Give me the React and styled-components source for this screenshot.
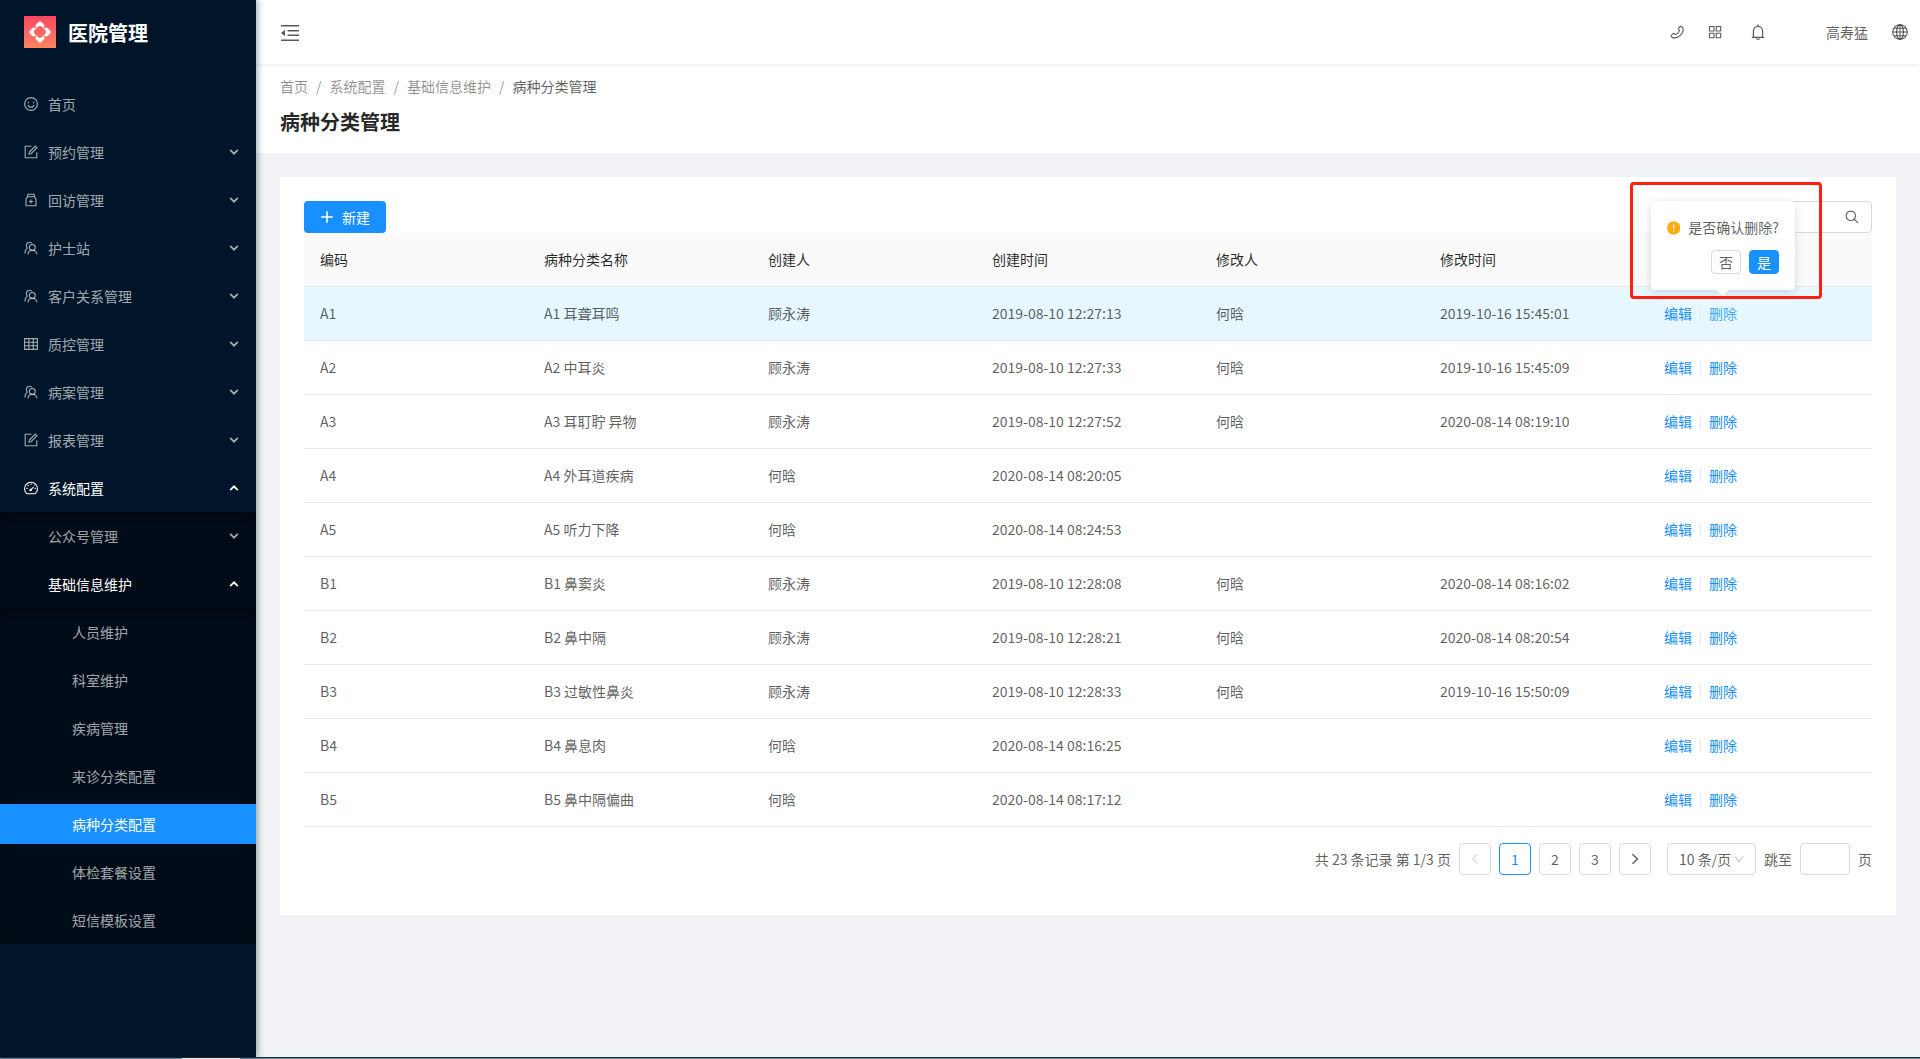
import React from "react";
import styled, { createGlobalStyle, css } from "styled-components";

const Global = createGlobalStyle`
  *, *::before, *::after { box-sizing: border-box; }
  body { margin: 0; background: #f0f2f5; }
  body, button, input, select {
    font-family: "Noto Sans CJK SC", "Noto Sans", sans-serif;
    font-size: 14px;
    line-height: 21px;
    color: rgba(0, 0, 0, 0.65);
  }
  a { color: inherit; text-decoration: none; }
  ul, ol { list-style: none; margin: 0; padding: 0; }
`;

const Layout = styled.div`
  display: grid;
  grid-template-columns: 256px minmax(0, 1fr);
  grid-template-rows: 1fr 2px;
  min-height: 100vh;
`;

const Sidebar = styled.aside`
  position: relative;
  z-index: 1;
  background: #001529;
  box-shadow: 2px 0 6px rgba(0, 21, 41, 0.35);
`;

const Brand = styled.a`
  display: flex;
  align-items: center;
  gap: 12px;
  height: 64px;
  padding: 0 24px;
  color: #fff;
  font-size: 20px;
  font-weight: 600;
`;

const Menu = styled.ul`
  padding: 16px 0 0;
`;

const SubMenu = styled.ul`
  background: #000c17;
  box-shadow: 0 2px 8px rgba(0, 0, 0, 0.45) inset;
  padding: 4px 0;
  margin: 4px 0;
  display: grid;
  row-gap: 8px;
`;

const NestedMenu = styled(SubMenu)`
  margin-bottom: -4px;
`;

const TopItems = styled.ul`
  display: grid;
  row-gap: 8px;
  padding-top: 4px;
`;

const MenuLink = styled.a`
  display: flex;
  align-items: center;
  gap: 10px;
  height: 40px;
  padding: 0 16px 0 ${(p) => p.$indent}px;
  color: ${(p) => (p.$active ? "#fff" : "rgba(255, 255, 255, 0.65)")};
  background: ${(p) => (p.$selected ? "#1890ff" : "transparent")};
`;

const MenuText = styled.span`
  flex: 1;
`;

const Main = styled.div`
  display: flex;
  flex-direction: column;
  min-width: 0;
`;

const Header = styled.header`
  position: relative;
  display: flex;
  align-items: center;
  justify-content: space-between;
  height: 64px;
  padding: 0 12px 0 24px;
  background: #fff;
  box-shadow: 0 1px 4px rgba(0, 21, 41, 0.08);
`;

const Tools = styled.div`
  display: flex;
  align-items: center;
  gap: 24px;
`;

const IconButton = styled.button`
  display: inline-flex;
  padding: 0;
  border: 0;
  background: none;
  margin-left: ${(p) => (p.$spaced ? 4 : 0)}px;
`;

const User = styled.span`
  margin-left: 36px;
`;

const PageHead = styled.section`
  padding: 12px 24px 14px;
  background: #fff;
`;

const Crumbs = styled.ol`
  display: flex;
  color: rgba(0, 0, 0, 0.45);
  li:last-child { color: rgba(0, 0, 0, 0.65); }
  li + li::before {
    content: "/";
    margin: 0 8px;
    color: rgba(0, 0, 0, 0.45);
  }
`;

const Title = styled.h1`
  margin: 8px 0 0;
  font-size: 20px;
  line-height: 34px;
  font-weight: 600;
  color: rgba(0, 0, 0, 0.85);
`;

const Card = styled.section`
  margin: 24px;
  padding: 24px 24px 40px;
  background: #fff;
`;

const Toolbar = styled.div`
  display: flex;
  justify-content: space-between;
`;

const PrimaryButton = styled.button`
  display: inline-flex;
  align-items: center;
  gap: 8px;
  height: 32px;
  padding: 0 16px;
  border: 0;
  border-radius: 4px;
  background: #1890ff;
  color: #fff;
`;

const SearchBox = styled.label`
  display: flex;
  align-items: center;
  width: 200px;
  height: 32px;
  padding: 0 12px;
  border: 1px solid #d9d9d9;
  border-radius: 4px;
  input {
    flex: 1;
    min-width: 0;
    border: 0;
    outline: 0;
    background: none;
  }
`;

const Table = styled.table`
  width: 100%;
  table-layout: fixed;
  border-collapse: separate;
  border-spacing: 0;
  text-align: left;
  th, td {
    height: 54px;
    padding: 0 16px;
    border-bottom: 1px solid #e8e8e8;
    font-weight: 400;
  }
  th {
    background: #fafafa;
    color: rgba(0, 0, 0, 0.85);
  }
`;

const Row = styled.tr`
  background: ${(p) => (p.$hovered ? "#e6f7ff" : "transparent")};
`;

const Actions = styled.div`
  display: flex;
  align-items: center;
`;

const Anchor = styled.div`
  position: relative;
`;

const ActionLink = styled.a`
  color: ${(p) => (p.$hovered ? "#40a9ff" : "#1890ff")};
`;

const Divider = styled.span`
  width: 1px;
  height: 13px;
  margin: 0 8px;
  background: #e8e8e8;
`;

const Popover = styled.div`
  position: absolute;
  left: 50%;
  bottom: 34px;
  transform: translateX(-50%);
  z-index: 2;
  width: 144px;
  padding: 16px;
  border-radius: 4px;
  background: #fff;
  box-shadow: 0 2px 8px rgba(0, 0, 0, 0.15);
  &::after {
    content: "";
    position: absolute;
    left: 50%;
    bottom: -4px;
    width: 8px;
    height: 8px;
    margin-left: -4px;
    background: #fff;
    transform: rotate(45deg);
  }
`;

const PopMessage = styled.div`
  display: flex;
  align-items: center;
  gap: 8px;
  white-space: nowrap;
`;

const PopButtons = styled.div`
  display: flex;
  justify-content: flex-end;
  gap: 8px;
  margin-top: 12px;
`;

const SmallButton = styled.button`
  width: 30px;
  height: 24px;
  padding: 0;
  border: 1px solid ${(p) => (p.$primary ? "#1890ff" : "#d9d9d9")};
  border-radius: 4px;
  background: ${(p) => (p.$primary ? "#1890ff" : "#fff")};
  ${(p) => p.$primary && css`color: #fff;`}
`;

const Highlight = styled.div`
  position: absolute;
  left: -79px;
  bottom: 25px;
  z-index: 3;
  width: 192px;
  height: 117px;
  border: 3px solid #ff1f12;
  border-radius: 4px;
  pointer-events: none;
`;

const Pagination = styled.nav`
  display: flex;
  align-items: center;
  justify-content: flex-end;
  gap: 8px;
  margin-top: 16px;
`;

const PageButton = styled.button`
  display: inline-flex;
  align-items: center;
  justify-content: center;
  width: 32px;
  height: 32px;
  padding: 0;
  border: 1px solid ${(p) => (p.$current ? "#1890ff" : "#d9d9d9")};
  border-radius: 4px;
  background: #fff;
  color: ${(p) => (p.$current ? "#1890ff" : p.disabled ? "rgba(0,0,0,0.25)" : "rgba(0,0,0,0.65)")};
`;

const SizeSelect = styled.span`
  position: relative;
  margin-left: 8px;
  select {
    display: block;
    appearance: none;
    width: 89px;
    height: 32px;
    padding: 0 11px;
    border: 1px solid #d9d9d9;
    border-radius: 4px;
    background: #fff;
  }
  svg {
    position: absolute;
    right: 12px;
    top: 11px;
    color: rgba(0, 0, 0, 0.35);
    pointer-events: none;
  }
`;

const Jump = styled.label`
  display: flex;
  align-items: center;
  gap: 8px;
  input {
    width: 50px;
    height: 32px;
    border: 1px solid #d9d9d9;
    border-radius: 4px;
  }
`;

const DesktopEdge = styled.div`
  grid-column: 1 / -1;
  display: flex;
  padding-left: 182px;
  background: #7488a0;
  border-top: 1px solid #1c2c3c;
`;

const EdgeTab = styled.span`
  width: 58px;
  background: #fff;
`;

const paths = {
  smile: <><circle cx="8" cy="8" r="6.4" /><path d="M5.400 5.800v1.400M10.600 5.800v1.400M5 8.800c.4 1.700 1.600 2.500 3 2.500s2.600-.8 3-2.500" /></>,
  form: <><path d="M8.500 2.200H2.200v11.600h11.600V8.200" /><path d="M6 10.100l.3-2.100 6-6 1.700 1.700-6 6z" /></>,
  medicine: <><path d="M4.800 2.200h6.400v2.500H4.800zM4.800 4.700L3 7v6.800h10V7l-1.800-2.300M8 7.500v4M6 9.500h4" /></>,
  team: <><path d="M4.500 8.100A3.300 3.300 0 1 1 9.200 3.500M1.900 13.400c.1-2.600 1.100-4.400 2.600-5.300" /><circle cx="9.300" cy="7.400" r="2.900" /><path d="M5 14.500c.1-2.700 2-4.200 4.300-4.200s4.400 1.500 4.700 4.200" /></>,
  table: <path d="M1.600 2.600h12.800v10.800H1.600zM1.600 6.200h12.800M1.600 9.800h12.800M5.900 2.600v10.800M10.200 2.600v10.800" />,
  dashboard: <><path d="M4 13.800a6.500 6.500 0 1 1 8 0zM8 9.600l2.500-2.500M8 3.500v1.300M4.700 4.900l.9.900M3.300 8.400h1.300M11.500 8.400h1.300M11.300 4.900l-.5.500" /><circle cx="7.600" cy="10" r=".8" /></>,
  down: <path d="M3.500 5.500L8 10l4.500-4.500" />,
  up: <path d="M3.500 10.500L8 6l4.500 4.500" />,
  left: <path d="M11 2.500L5 8l6 5.500" />,
  right: <path d="M5 2.500l6 5.500-6 5.500" />,
  arrowDown: <path d="M2 4l6 8 6-8" />,
  plus: <path d="M8 2.200v11.600M2.200 8h11.600" />,
  search: <><circle cx="6.800" cy="6.800" r="4.700" /><path d="M10.200 10.200l4 4" /></>,
  phone: <path d="M11.400 2.200l2.300 1.300c1 2.900-.3 5.900-2.400 7.800-2.200 2-5.200 3.100-8 2.300L2 11.700l2.400-2.300 2.600 1c1.600-.6 2.900-1.800 3.400-3.600l-1-2.500z" />,
  grid: <path d="M2.500 2.500h4.500v4.500H2.500zM9.200 2.500h4.500v4.500H9.200zM2.500 9.200h4.500v4.500H2.500zM9.200 9.200h4.500v4.500H9.200z" />,
  bell: <path d="M2.600 12.700h10.800M4 12.700V7a4 4 0 0 1 8 0v5.700M8 3V1.400M6.600 13.600c.4 1.100 2.400 1.100 2.800 0" />,
  globe: <><circle cx="8" cy="8" r="6.400" /><ellipse cx="8" cy="8" rx="3" ry="6.400" /><path d="M8 1.600v12.800M1.600 8h12.800M2.700 4.800h10.600M2.700 11.200h10.600" /></>,
};

const Svg = styled.svg`
  flex: none;
  fill: none;
  stroke: currentColor;
  overflow: visible;
`;

const Icon = ({ name, size = 14, weight = 1.1 }) => (
  <Svg width={size} height={size} viewBox="1 1 14 14" strokeWidth={weight} aria-hidden="true">
    {paths[name]}
  </Svg>
);

const Logo = () => (
  <svg width="32" height="32" viewBox="0 0 32 32" aria-hidden="true">
    <defs>
      <linearGradient id="brand" x1="0" y1="0" x2="0" y2="1">
        <stop offset="0" stopColor="#ff4560" />
        <stop offset="1" stopColor="#ff8560" />
      </linearGradient>
    </defs>
    <path fill="url(#brand)" d="M0 0h32v32H0z" />
    {[0, 90, 180, 270].map((turn) => (
      <path key={turn} transform={`rotate(${turn} 16 16)`} fill="#fff"
        d="M15.200 5.400Q16 4.700 16.800 5.400L19.600 7.900C20.800 9.200 20.600 11 19.200 12.400C18.600 10.900 17.400 10 16 10C14.600 10 13.400 10.900 12.800 12.400C11.400 11 11.200 9.200 12.400 7.900Z" />
    ))}
  </svg>
);

const FoldIcon = () => (
  <Svg width="20" height="20" viewBox="0 0 20 20" aria-hidden="true">
    <path strokeWidth="1.500" d="M1 3.700h18M7.500 8.700H19M7.500 13.300H19M1 18.300h18" />
    <path fill="currentColor" stroke="none" d="M1 11l4-3.300v6.600z" />
  </Svg>
);

const WarnIcon = () => (
  <svg width="14" height="14" viewBox="0 0 14 14" aria-hidden="true">
    <circle cx="7" cy="7" r="7" fill="#faad14" />
    <path stroke="#fff" strokeWidth="1.200" d="M7 3.300v4.600M7 9.500v1.200" />
  </svg>
);

const topMenu = [
  ["首页", "smile"],
  ["预约管理", "form"],
  ["回访管理", "medicine"],
  ["护士站", "team"],
  ["客户关系管理", "team"],
  ["质控管理", "table"],
  ["病案管理", "team"],
  ["报表管理", "form"],
  ["系统配置", "dashboard"],
];
const leaves = ["人员维护", "科室维护", "疾病管理", "来诊分类配置", "病种分类配置", "体检套餐设置", "短信模板设置"];
const columns = ["编码", "病种分类名称", "创建人", "创建时间", "修改人", "修改时间", ""];
const rows = [
  ["A1", "A1 耳聋耳鸣", "顾永涛", "2019-08-10 12:27:13", "何晗", "2019-10-16 15:45:01"],
  ["A2", "A2 中耳炎", "顾永涛", "2019-08-10 12:27:33", "何晗", "2019-10-16 15:45:09"],
  ["A3", "A3 耳耵聍 异物", "顾永涛", "2019-08-10 12:27:52", "何晗", "2020-08-14 08:19:10"],
  ["A4", "A4 外耳道疾病", "何晗", "2020-08-14 08:20:05", "", ""],
  ["A5", "A5 听力下降", "何晗", "2020-08-14 08:24:53", "", ""],
  ["B1", "B1 鼻窦炎", "顾永涛", "2019-08-10 12:28:08", "何晗", "2020-08-14 08:16:02"],
  ["B2", "B2 鼻中隔", "顾永涛", "2019-08-10 12:28:21", "何晗", "2020-08-14 08:20:54"],
  ["B3", "B3 过敏性鼻炎", "顾永涛", "2019-08-10 12:28:33", "何晗", "2019-10-16 15:50:09"],
  ["B4", "B4 鼻息肉", "何晗", "2020-08-14 08:16:25", "", ""],
  ["B5", "B5 鼻中隔偏曲", "何晗", "2020-08-14 08:17:12", "", ""],
];

const MenuItem = ({ text, icon, indent = 24, arrow, active, selected }) => (
  <MenuLink href="#" $indent={indent} $active={active || selected} $selected={selected}>
    {icon && <Icon name={icon} />}
    <MenuText>{text}</MenuText>
    {arrow && <Icon name={arrow} size={12} weight={2} />}
  </MenuLink>
);

const ConfirmDelete = () => (
  <Popover role="dialog" aria-label="是否确认删除?">
    <PopMessage><WarnIcon />是否确认删除?</PopMessage>
    <PopButtons>
      <SmallButton>否</SmallButton>
      <SmallButton $primary>是</SmallButton>
    </PopButtons>
  </Popover>
);

export default function App() {
  return (
    <Layout>
      <Global />
      <Sidebar>
        <Brand href="#"><Logo />医院管理</Brand>
        <Menu>
          <li>
            <TopItems>
              {topMenu.map(([text, icon], i) => (
                <li key={text}>
                  <MenuItem text={text} icon={icon} active={i === 8} arrow={i === 8 ? "up" : i > 0 ? "down" : null} />
                </li>
              ))}
            </TopItems>
          </li>
          <li>
            <SubMenu>
              <li><MenuItem text="公众号管理" indent={48} arrow="down" /></li>
              <li>
                <MenuItem text="基础信息维护" indent={48} arrow="up" active />
                <NestedMenu>
                  {leaves.map((text, i) => (
                    <li key={text}><MenuItem text={text} indent={72} selected={i === 4} /></li>
                  ))}
                </NestedMenu>
              </li>
            </SubMenu>
          </li>
        </Menu>
      </Sidebar>
      <Main>
        <Header>
          <IconButton aria-label="收起菜单"><FoldIcon /></IconButton>
          <Tools>
            <IconButton aria-label="电话"><Icon name="phone" /></IconButton>
            <IconButton aria-label="应用"><Icon name="grid" /></IconButton>
            <IconButton $spaced aria-label="通知"><Icon name="bell" size={16} /></IconButton>
            <User>高寿猛</User>
            <IconButton aria-label="语言"><Icon name="globe" size={16} weight={0.9} /></IconButton>
          </Tools>
        </Header>
        <PageHead>
          <Crumbs>
            <li><a href="#">首页</a></li>
            <li><a href="#">系统配置</a></li>
            <li><a href="#">基础信息维护</a></li>
            <li>病种分类管理</li>
          </Crumbs>
          <Title>病种分类管理</Title>
        </PageHead>
        <Card>
          <Toolbar>
            <PrimaryButton><Icon name="plus" weight={1.600} />新建</PrimaryButton>
            <SearchBox>
              <input type="text" aria-label="搜索" />
              <Icon name="search" />
            </SearchBox>
          </Toolbar>
          <Table>
            <thead>
              <tr>{columns.map((c) => <th key={c} scope="col">{c}</th>)}</tr>
            </thead>
            <tbody>
              {rows.map((row, i) => (
                <Row key={row[0]} $hovered={i === 0}>
                  {row.map((cell, j) => <td key={j}>{cell}</td>)}
                  <td>
                    <Actions>
                      <ActionLink href="#">编辑</ActionLink>
                      <Divider />
                      <Anchor>
                        <ActionLink href="#" $hovered={i === 0}>删除</ActionLink>
                        {i === 0 && <><ConfirmDelete /><Highlight /></>}
                      </Anchor>
                    </Actions>
                  </td>
                </Row>
              ))}
            </tbody>
          </Table>
          <Pagination aria-label="分页">
            <span>共 23 条记录 第 1/3 页</span>
            <PageButton disabled aria-label="上一页"><Icon name="left" size={12} /></PageButton>
            <PageButton $current aria-current="page">1</PageButton>
            <PageButton>2</PageButton>
            <PageButton>3</PageButton>
            <PageButton aria-label="下一页"><Icon name="right" size={12} weight={1.600} /></PageButton>
            <SizeSelect>
              <select aria-label="每页条数"><option>10 条/页</option></select>
              <Icon name="arrowDown" size={10} />
            </SizeSelect>
            <Jump>跳至<input type="text" />页</Jump>
          </Pagination>
        </Card>
      </Main>
      <DesktopEdge><EdgeTab /></DesktopEdge>
    </Layout>
  );
}
